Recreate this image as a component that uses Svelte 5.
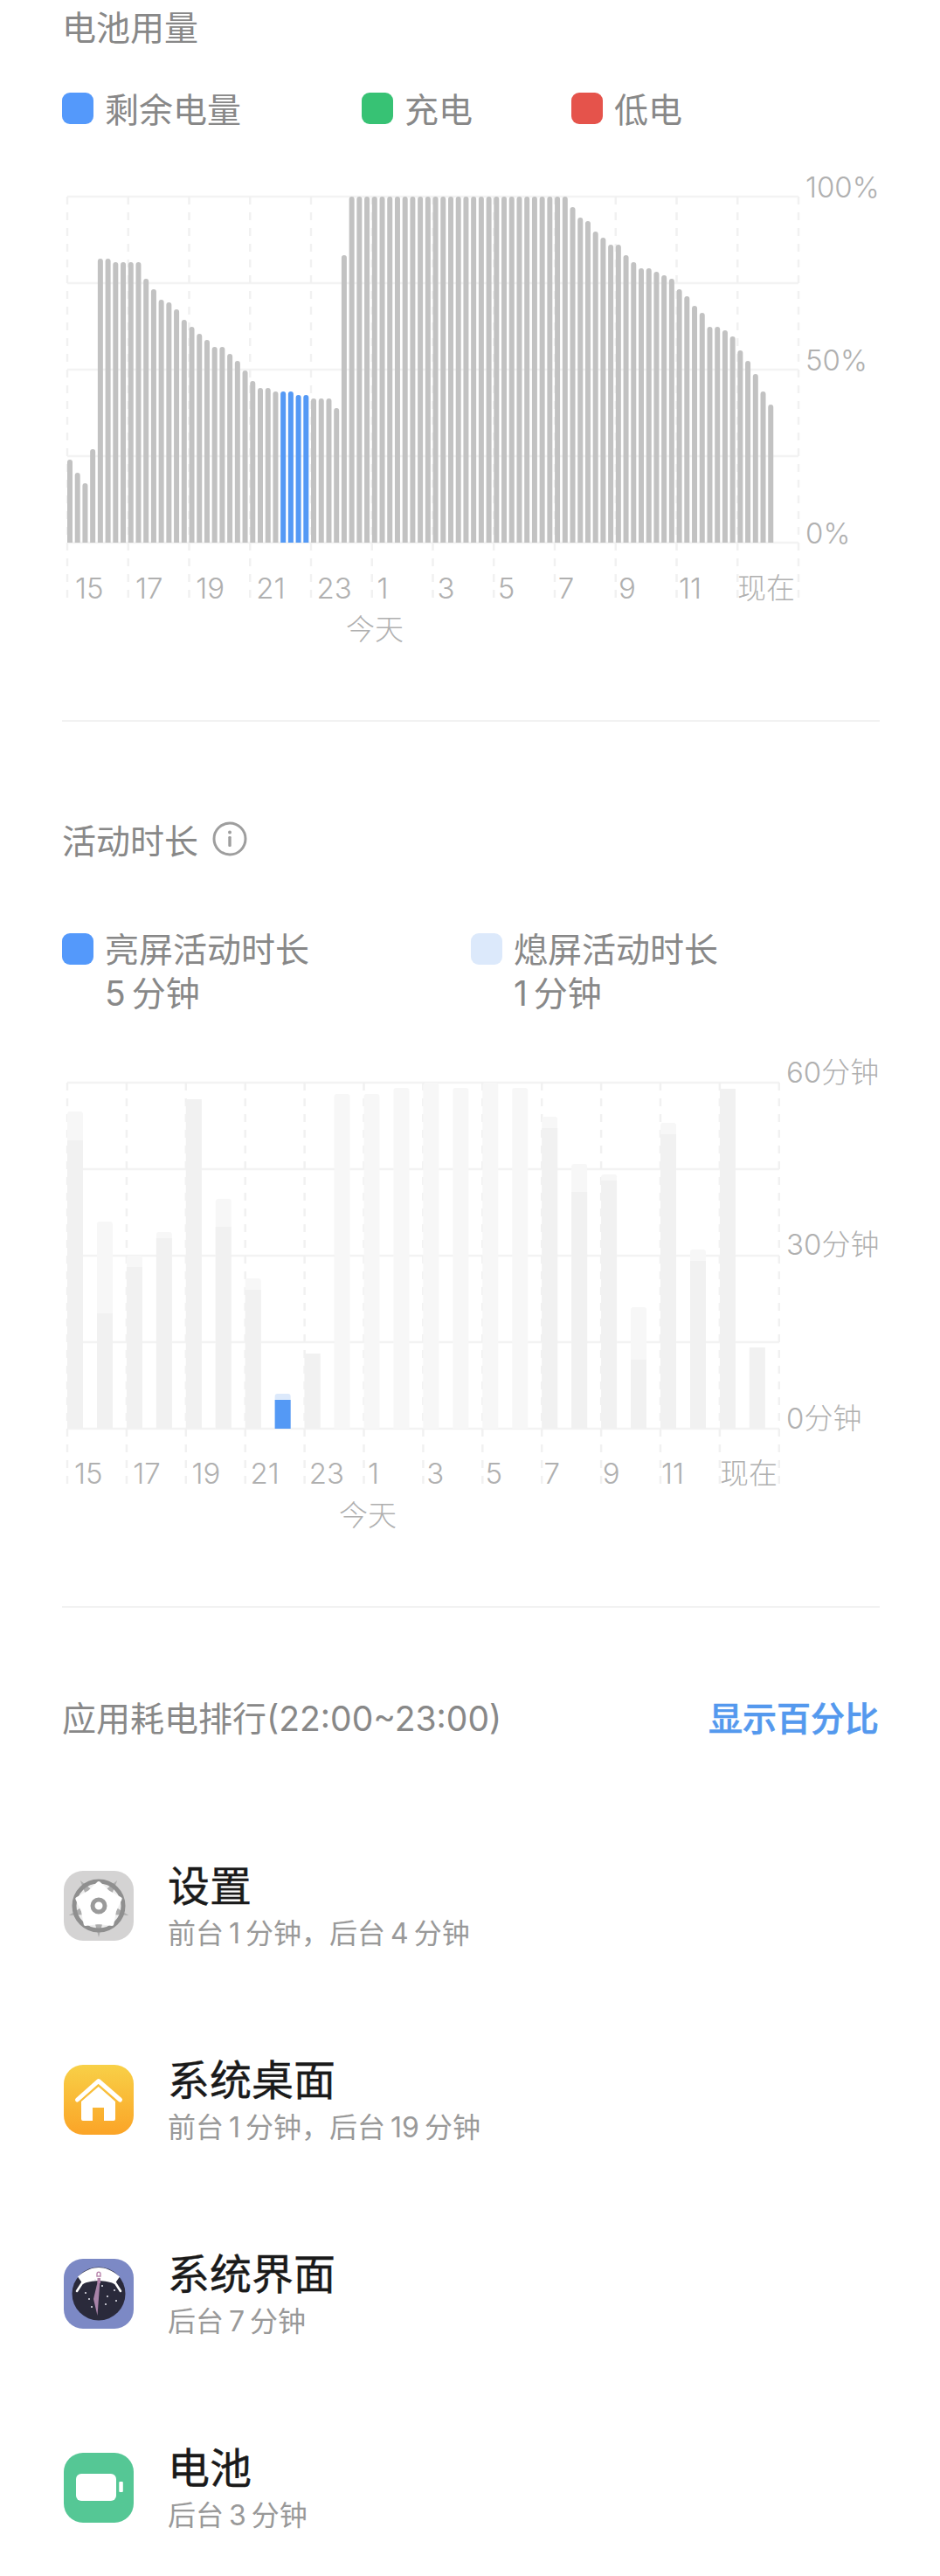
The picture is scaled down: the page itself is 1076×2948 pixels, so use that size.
<script>
  // bar tops in page px, 15 minute slots
  const usageTops = [
    525, 540, 552, 513, 295, 295, 299, 299, 299, 299, 318, 330, 342, 345, 353, 365, 373, 381, 388, 396, 396, 404, 412, 423,
    435, 443, 443, 447, 447, 447, 451, 451, 455, 455, 455, 466, 291,
    ...Array(29).fill(224),
    236, 248, 252, 264, 271, 279, 279, 291, 299, 306, 306, 310, 314, 318, 330, 338, 349, 357, 373, 373, 377, 384, 400, 412, 427, 447, 462,
  ];
  const usageBottom = 620;
  const usageTicks = ['15', '17', '19', '21', '23', '1', '3', '5', '7', '9', '11', '现在'];

  // top = whole bar, split = where the screen-on part starts
  const activeBars = [
    { top: 1271, split: 1304 }, { top: 1397, split: 1502 }, { top: 1436, split: 1449 }, { top: 1409, split: 1416 },
    { top: 1257, split: 1257 }, { top: 1371, split: 1403 }, { top: 1462, split: 1475 }, { top: 1594, split: 1601, now: true },
    { top: 1548, split: 1548 }, { top: 1251, split: 1634 }, { top: 1251, split: 1634 }, { top: 1244, split: 1634 },
    { top: 1238, split: 1634 }, { top: 1244, split: 1634 }, { top: 1238, split: 1634 }, { top: 1244, split: 1634 },
    { top: 1277, split: 1290 }, { top: 1331, split: 1363 }, { top: 1343, split: 1350 }, { top: 1495, split: 1555 },
    { top: 1284, split: 1297 }, { top: 1429, split: 1442 }, { top: 1245, split: 1245 }, { top: 1541, split: 1541 },
  ];
  const activeBottom = 1634;

  const apps = [
    { name: '设置', note: '前台 1 分钟，后台 4 分钟', icon: 'settings' },
    { name: '系统桌面', note: '前台 1 分钟，后台 19 分钟', icon: 'home' },
    { name: '系统界面', note: '后台 7 分钟', icon: 'ui' },
    { name: '电池', note: '后台 3 分钟', icon: 'battery' },
  ];

  const range = (n) => Array.from({ length: n }, (_, i) => i);
  const topBar = (x, top, bottom, w, r) =>
    `M${x} ${bottom}V${top + r}a${r} ${r} 0 0 1 ${r} ${-r}h${w - 2 * r}a${r} ${r} 0 0 1 ${r} ${r}V${bottom}Z`;
  const petal = (r1, r2, n, rot = 0) =>
    range(n * 2).map((i) => {
      const a = ((i * 180) / n + rot - 90) * (Math.PI / 180);
      const r = i % 2 ? r2 : r1;
      return `${(40 + r * Math.cos(a)).toFixed(1)},${(40 + r * Math.sin(a)).toFixed(1)}`;
    }).join(' ');
  const stars = [[36, 24], [50, 43], [25, 39], [44, 31], [58, 36], [32, 55], [48, 52], [60, 48], [29, 46]];
</script>

<div class="page">
  <div class="title">电池用量</div>
  <div class="legend">
    <span class="key"><i class="sw blue"></i><span class="nudge">剩余电量</span></span>
    <span class="key k2"><i class="sw green"></i><span class="nudge">充电</span></span>
    <span class="key k3"><i class="sw red"></i><span class="nudge">低电</span></span>
  </div>

  <svg class="chart" viewBox="0 190 1076 590" width="1076" height="590">
    {#each range(5) as i}
      <line class="grid" x1="77" x2="914" y1={224 + i * 99} y2={224 + i * 99} />
    {/each}
    {#each range(13) as i}
      <line class="dash" x1={77 + i * 69.75} x2={77 + i * 69.75} y1="224" y2="686" />
    {/each}
    {#each usageTops as top, i}
      <path class={i >= 28 && i <= 31 ? 'bar-blue' : 'bar-gray'} d={topBar(77 + i * 8.72, top, usageBottom, 6, 3)} />
    {/each}
    {#each usageTicks as t, i}
      <text class="axis" x={i === 11 ? 844 : 86 + i * 69.1} y="684">{t}</text>
    {/each}
    <text class="axis" x="396" y="731">今天</text>
    <text class="axis" x="922" y="225">100%</text>
    <text class="axis" x="922" y="423">50%</text>
    <text class="axis" x="922" y="621">0%</text>
  </svg>

  <div class="divider first"></div>

  <div class="title second">
    活动时长
    <svg class="info" viewBox="0 0 40 40" width="40" height="40">
      <circle cx="20" cy="20" r="18" fill="none" stroke="#9e9e9e" stroke-width="3" />
      <circle cx="20" cy="12.6" r="2" fill="#9e9e9e" />
      <rect x="18.3" y="17" width="3.4" height="12" rx="1.2" fill="#9e9e9e" />
    </svg>
  </div>
  <div class="legend tall">
    <div class="key top"><i class="sw blue"></i><div>亮屏活动时长<br />5 分钟</div></div>
    <div class="key top k4"><i class="sw pale"></i><div>熄屏活动时长<br />1 分钟</div></div>
  </div>

  <svg class="chart chart2" viewBox="0 1200 1076 560" width="1076" height="560">
    {#each range(5) as i}
      <line class="grid" x1="77" x2="892" y1={1238 + i * 99} y2={1238 + i * 99} />
    {/each}
    {#each range(13) as i}
      <line class="dash" x1={77 + i * 67.9} x2={77 + i * 67.9} y1="1238" y2="1700" />
    {/each}
    {#each activeBars as b, i}
      {@const x = 77 + i * 33.95}
      <path class={b.now ? 'bar-pale' : 'bar-light'} d={topBar(x, b.top, activeBottom, 18, 3)} />
      {#if b.split < activeBottom}
        <rect class={b.now ? 'bar-blue' : 'bar-dim'} {x} y={b.split} width="18" height={activeBottom - b.split} />
      {/if}
    {/each}
    {#each usageTicks as t, i}
      <text class="axis" x={i === 11 ? 824 : 85 + i * 67.2} y="1697">{t}</text>
    {/each}
    <text class="axis" x="388" y="1745">今天</text>
    <text class="axis" x="900" y="1238">60分钟</text>
    <text class="axis" x="900" y="1435">30分钟</text>
    <text class="axis" x="900" y="1634">0分钟</text>
  </svg>

  <div class="divider third"></div>

  <div class="rank-head">
    <span>应用耗电排行(22:00~23:00)</span>
    <span class="toggle">显示百分比</span>
  </div>

  <div class="apps">
    {#each apps as app}
      <div class="app">
        <svg class="icon" viewBox="0 0 80 80" width="80" height="80">
          {#if app.icon === 'settings'}
            <rect width="80" height="80" rx="22" fill="#d4d3d3" />
            <circle cx="40" cy="40" r="29" fill="#eeeeee" />
            <polygon points={petal(36, 12, 5, 36)} fill="#adadad" />
            <circle cx="40" cy="40" r="28" fill="none" stroke="#8f8f8f" stroke-width="5" />
            <polygon points={petal(26, 19, 5)} fill="#fff" stroke="#fff" stroke-width="4" stroke-linejoin="round" />
            <circle cx="40" cy="40" r="7" fill="#fff" stroke="#9a9a9a" stroke-width="5" />
          {:else if app.icon === 'home'}
            <defs>
              <linearGradient id="homeBg" x1="0" y1="0" x2="0" y2="1">
                <stop offset="0" stop-color="#f8d047" />
                <stop offset="1" stop-color="#fba427" />
              </linearGradient>
            </defs>
            <rect width="80" height="80" rx="22" fill="url(#homeBg)" />
            <path d="M15.5 40 39.7 18.5 64.5 40" fill="none" stroke="#fff" stroke-width="5" stroke-linecap="round" stroke-linejoin="round" />
            <path d="M20 42 39.7 25 59 42V62a2 2 0 0 1-2 2H46V49H33V64H22a2 2 0 0 1-2-2Z" fill="#fff" />
          {:else if app.icon === 'ui'}
            <rect width="80" height="80" rx="22" fill="#7c89c5" />
            <circle cx="40" cy="40" r="30.5" fill="#2a2a3b" />
            <path d="M16 20.5C24 13 33 10 40 10S56 13 64 20.5L58 29C50 24 30 24 22 29Z" fill="#fff" />
            <path d="M21.5 27 15 37M58.5 27 65 37" stroke="#fff" stroke-width="2.6" stroke-linecap="round" />
            {#each stars as s}
              <circle cx={s[0]} cy={s[1]} r="1" fill="#e9e9f2" />
            {/each}
            <path d="M39 25 41.5 25 38.5 65 34 46Z" fill="#a883a8" />
            <path d="M38 17.5a2 2.4 0 0 1 4 0V20H38Z" fill="none" stroke="#b986ad" stroke-width="1.4" />
            <rect x="38.5" y="22" width="3.5" height="6" fill="#b080a8" />
          {:else}
            <rect width="80" height="80" rx="22" fill="#55c795" />
            <rect x="14" y="24" width="46" height="31" rx="6" fill="#fff" />
            <rect x="63.3" y="33" width="4.5" height="12" rx="1" fill="#fff" />
          {/if}
        </svg>
        <div class="app-text">
          <div class="app-name">{app.name}</div>
          <div class="app-note">{app.note}</div>
        </div>
      </div>
    {/each}
  </div>
</div>

<style>
  :global(body) {
    margin: 0;
    background: #fff;
  }
  .page {
    width: 1076px;
    height: 2948px;
    overflow: hidden;
    font-family: Inter, "Noto Sans CJK SC", sans-serif;
    color: #888;
  }
  .title {
    display: flex;
    align-items: center;
    gap: 16px;
    height: 60px;
    padding-left: 71px;
    font-size: 39px;
    box-sizing: border-box;
    padding-bottom: 2px;
  }
  .title.second {
    margin-top: 106px;
    padding-bottom: 4px;
  }
  .info {
    display: block;
  }
  .legend {
    display: flex;
    height: 36px;
    margin-top: 46px;
    padding-left: 71px;
    font-size: 39px;
  }
  .legend.tall {
    height: 103px;
    margin-top: 70px;
    word-spacing: -4px;
  }
  .key {
    display: flex;
    align-items: center;
    gap: 13px;
    line-height: 36px;
  }
  .nudge {
    padding-top: 3px;
  }
  .key.top {
    align-items: flex-start;
    line-height: 50px;
    width: 468px;
  }
  .key.top .sw {
    margin-top: 6px;
  }
  .k2 {
    margin-left: 138px;
  }
  .k3 {
    margin-left: 113px;
  }
  .sw {
    display: block;
    flex: none;
    width: 36px;
    height: 36px;
    border-radius: 9px;
  }
  .blue { background: #5499fb; }
  .green { background: #37c274; }
  .red { background: #e5534b; }
  .pale { background: #dce9fb; }

  .chart {
    display: block;
    margin-top: 49px;
  }
  .chart.chart2 {
    margin-top: 36px;
  }
  .grid {
    stroke: #f3f3f3;
    stroke-width: 2.5;
  }
  .dash {
    stroke: #f1f1f1;
    stroke-width: 2.5;
    stroke-dasharray: 9 9;
  }
  .bar-gray { fill: #c2c2c2; }
  .bar-blue { fill: #5499f5; }
  .bar-pale { fill: #dce9fb; }
  .bar-light { fill: #f7f7f7; }
  .bar-dim { fill: #f1f1f1; }
  .axis {
    font-size: 33px;
    font-weight: 300;
    fill: #b0b0b0;
  }

  .divider {
    height: 2px;
    margin: 43px 69px 0 71px;
    background: #f2f2f2;
  }
  .divider.third {
    margin-top: 77px;
  }
  .rank-head {
    display: flex;
    justify-content: space-between;
    align-items: center;
    height: 60px;
    box-sizing: border-box;
    padding: 0 70px 6px 71px;
    margin-top: 97px;
    font-size: 39px;
  }
  .toggle {
    color: #5499ee;
    font-weight: 500;
    -webkit-text-stroke: 0.6px #5499ee;
  }
  .apps {
    margin-top: 73px;
  }
  .app {
    display: flex;
    align-items: center;
    gap: 39px;
    height: 222px;
    padding-left: 73px;
  }
  .icon {
    display: block;
    flex: none;
  }
  .app-text {
    padding-top: 12px;
  }
  .app-name {
    font-size: 48px;
    line-height: 50px;
    margin-bottom: 2px;
    color: #1a1a1a;
    -webkit-text-stroke: 0.4px #1a1a1a;
  }
  .app-note {
    font-size: 32px;
    line-height: 54px;
    color: #999;
    word-spacing: -3px;
  }
</style>
